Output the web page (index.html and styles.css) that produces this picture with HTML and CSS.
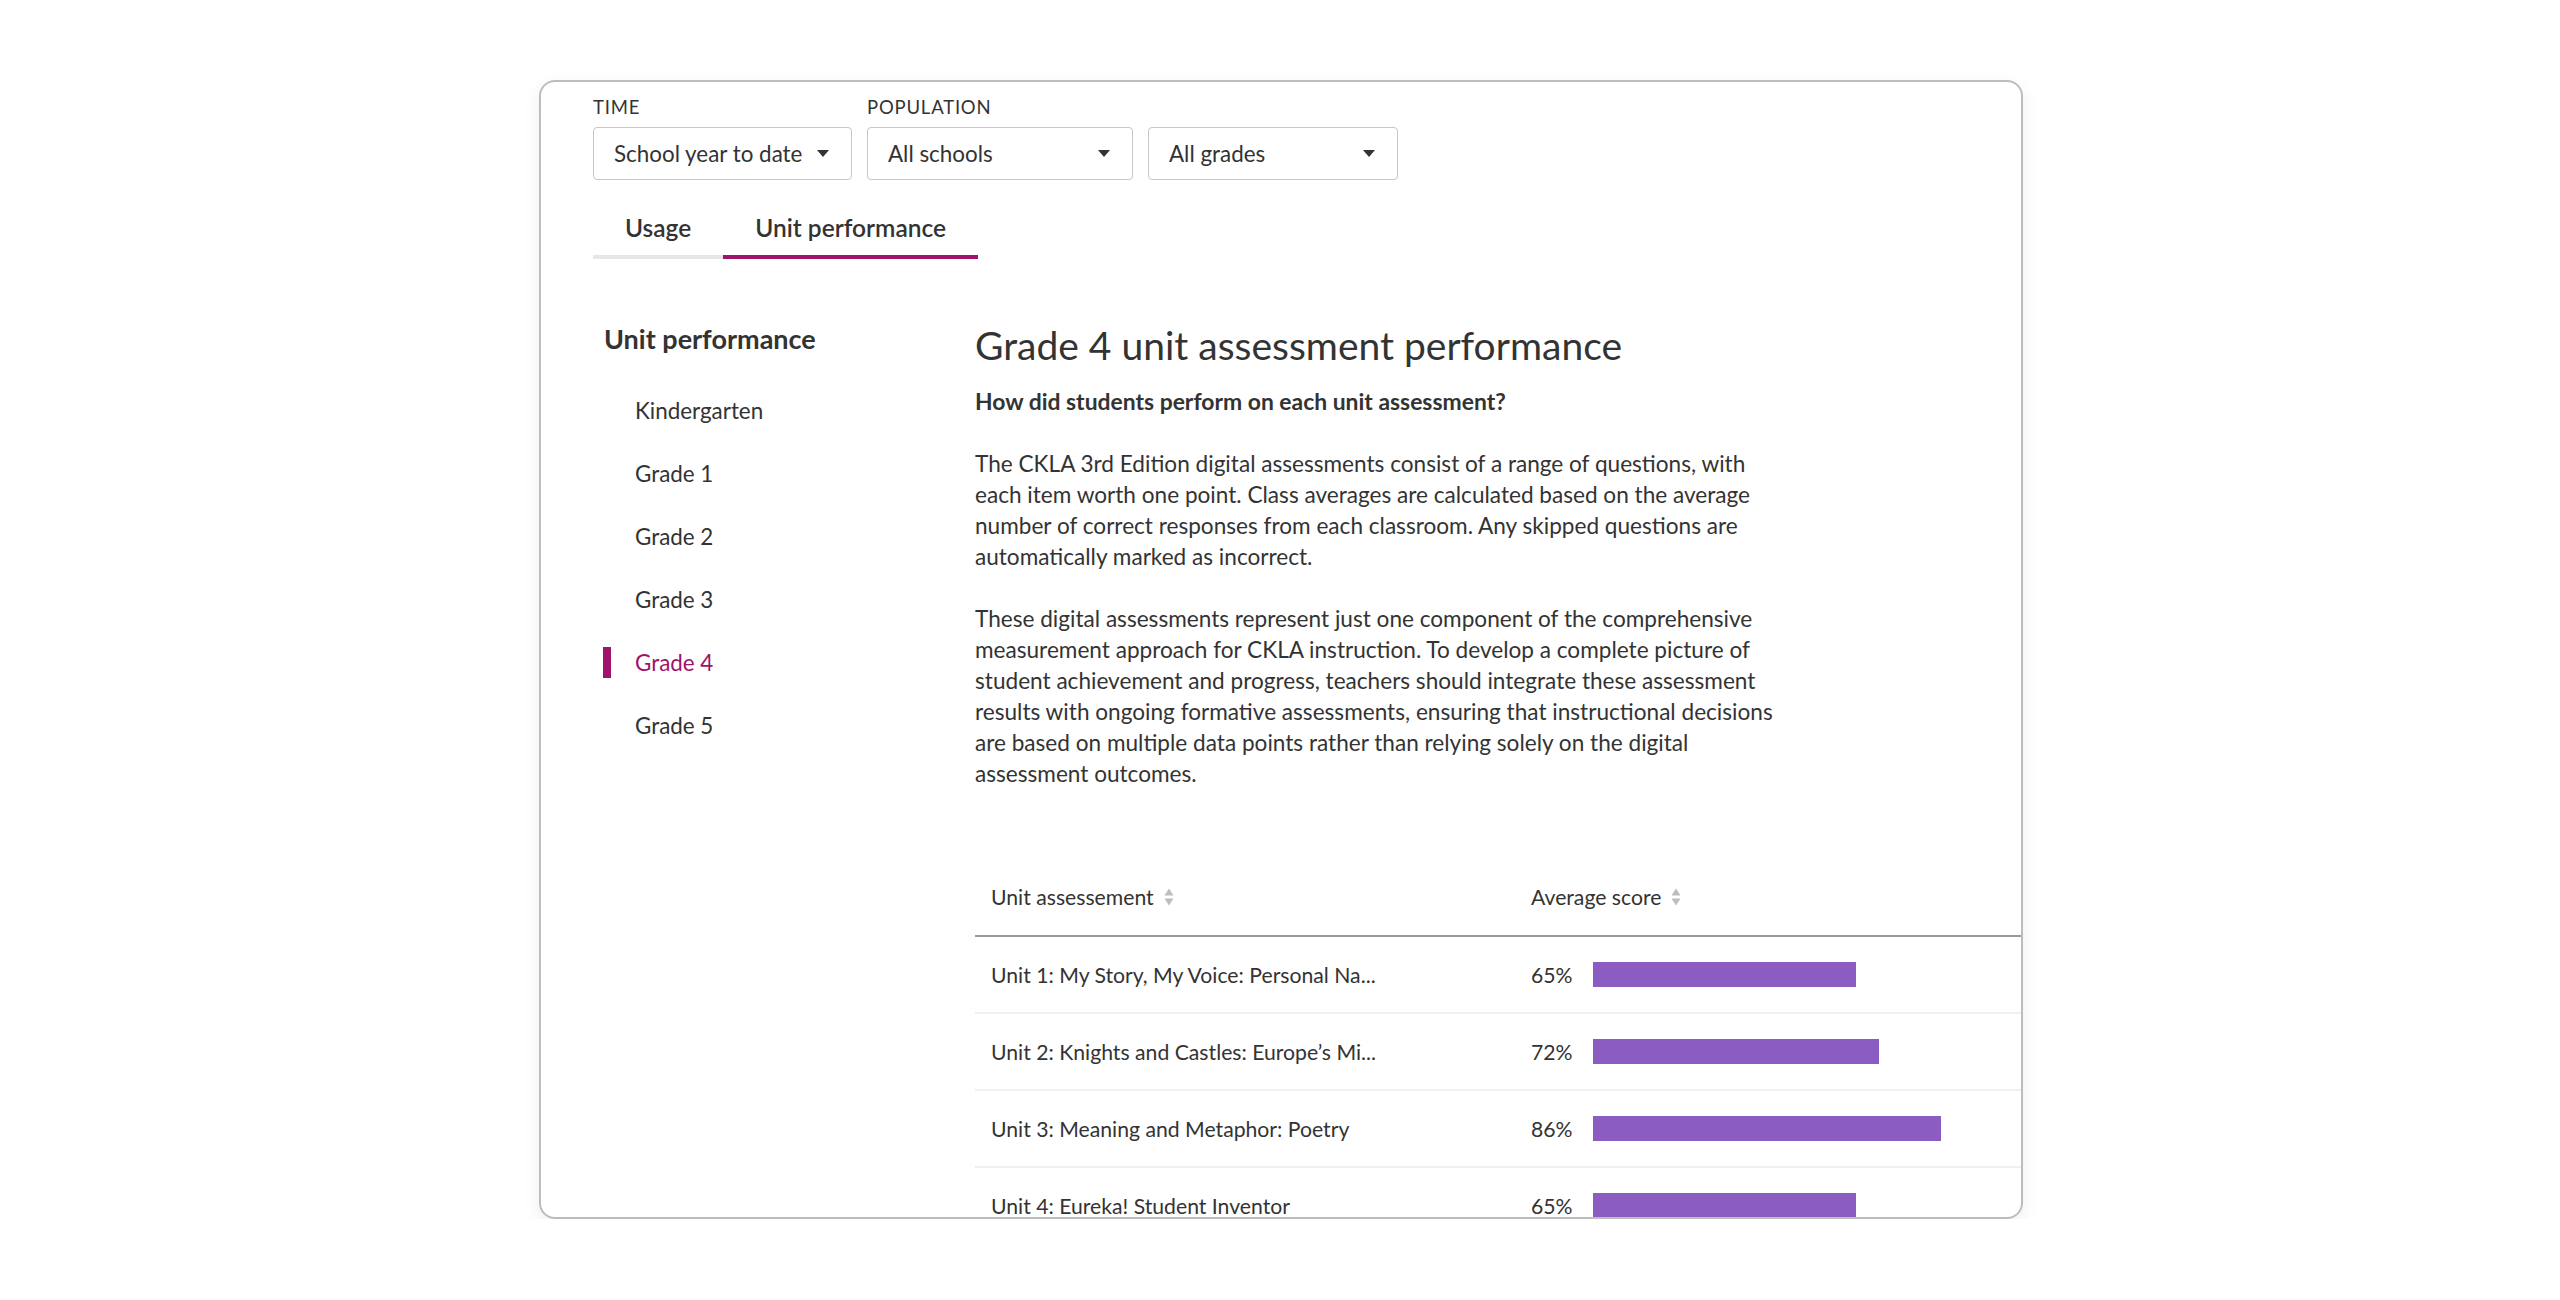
FILE: index.html
```html
<!DOCTYPE html>
<html lang="en">
<head>
<meta charset="utf-8">
<title>Unit performance</title>
<link rel="stylesheet" href="styles.css">
</head>
<body>
<div class="card">
  <div class="filters">
    <div class="filter">
      <div class="filter-label">Time</div>
      <div class="select w1"><span>School year to date</span><span class="caret"></span></div>
    </div>
    <div class="filter">
      <div class="filter-label">Population</div>
      <div class="select w2"><span>All schools</span><span class="caret"></span></div>
    </div>
    <div class="filter">
      <div class="filter-label">&nbsp;</div>
      <div class="select w3"><span>All grades</span><span class="caret"></span></div>
    </div>
  </div>

  <div class="tabs">
    <div class="tab">Usage</div>
    <div class="tab active">Unit performance</div>
  </div>

  <div class="body">
    <aside class="sidebar">
      <h2 class="side-title">Unit performance</h2>
      <ul class="side-list">
        <li class="side-item">Kindergarten</li>
        <li class="side-item">Grade 1</li>
        <li class="side-item">Grade 2</li>
        <li class="side-item">Grade 3</li>
        <li class="side-item current">Grade 4</li>
        <li class="side-item">Grade 5</li>
      </ul>
    </aside>

    <main class="main">
      <h1 class="title">Grade 4 unit assessment performance</h1>
      <p class="question">How did students perform on each unit assessment?</p>
      <p class="para">The CKLA 3rd Edition digital assessments consist of a range of questions, with each item worth one point. Class averages are calculated based on the average number of correct responses from each classroom. Any skipped questions are automatically marked as incorrect.</p>
      <p class="para">These digital assessments represent just one component of the comprehensive measurement approach for CKLA instruction. To develop a complete picture of student achievement and progress, teachers should integrate these assessment results with ongoing formative assessments, ensuring that instructional decisions are based on multiple data points rather than relying solely on the digital assessment outcomes.</p>

      <div class="table">
        <div class="row head">
          <div class="col c1">Unit assessement <svg class="sort" width="10" height="20" viewBox="0 0 10 20"><path d="M5 1.5 L9.5 8.5 H0.5 Z" fill="#bdbdbd"/><path d="M5 18.5 L9.5 11.5 H0.5 Z" fill="#bdbdbd"/></svg></div>
          <div class="col c2">Average score <svg class="sort" width="10" height="20" viewBox="0 0 10 20"><path d="M5 1.5 L9.5 8.5 H0.5 Z" fill="#bdbdbd"/><path d="M5 18.5 L9.5 11.5 H0.5 Z" fill="#bdbdbd"/></svg></div>
        </div>
        <div class="row">
          <div class="col c1">Unit 1: My Story, My Voice: Personal Na...</div>
          <div class="col c2"><span class="pct">65%</span><span class="bar" style="width:263px"></span></div>
        </div>
        <div class="row">
          <div class="col c1">Unit 2: Knights and Castles: Europe’s Mi...</div>
          <div class="col c2"><span class="pct">72%</span><span class="bar" style="width:286px"></span></div>
        </div>
        <div class="row">
          <div class="col c1">Unit 3: Meaning and Metaphor: Poetry</div>
          <div class="col c2"><span class="pct">86%</span><span class="bar" style="width:348px"></span></div>
        </div>
        <div class="row">
          <div class="col c1">Unit 4: Eureka! Student Inventor</div>
          <div class="col c2"><span class="pct">65%</span><span class="bar" style="width:263px"></span></div>
        </div>
      </div>
    </main>
  </div>
</div>
</body>
</html>
```

FILE: styles.css
```css
* { box-sizing: border-box; }

html, body {
  margin: 0;
  padding: 0;
  background: #ffffff;
}

body {
  font-family: Lato, "Noto Sans", "Liberation Sans", sans-serif;
  color: #333333;
}

.card {
  margin: 80px 0 0 539px;
  width: 1484px;
  height: 1139px;
  border: 2px solid #bdbdbd;
  border-radius: 16px;
  background: #fff;
  box-shadow: 0 6px 18px rgba(0, 0, 0, 0.07);
  overflow: hidden;
  padding: 15px 0 0 52px;
}

/* filters */
.filters {
  display: flex;
  gap: 15px;
}

.filter-label {
  font-size: 18.5px;
  line-height: 20px;
  letter-spacing: 0.8px;
  text-transform: uppercase;
  color: #333;
  margin-bottom: 10px;
}

.select {
  height: 53px;
  border: 1px solid #c6c6c6;
  border-radius: 4px;
  display: flex;
  align-items: center;
  justify-content: space-between;
  padding: 0 22px 0 20px;
  font-size: 22.4px;
  color: #333;
}

.w1 { width: 259px; }
.w2 { width: 266px; }
.w3 { width: 250px; }

.caret {
  width: 0;
  height: 0;
  border-left: 6px solid transparent;
  border-right: 6px solid transparent;
  border-top: 7.5px solid #333;
}

/* tabs */
.tabs {
  display: flex;
  margin-top: 34px;
}

.tab {
  padding: 0 32px 13px;
  font-size: 24.5px;
  line-height: 28px;
  font-weight: 600;
  color: #333;
  border-bottom: 4px solid #e6e6e6;
}

.tab.active {
  border-bottom-color: #a0136a;
}

/* body */
.body {
  display: flex;
  padding-top: 64px;
}

.sidebar {
  width: 382px;
  flex: none;
  padding-left: 10px;
}

.side-title {
  margin: 0;
  padding-left: 1px;
  font-size: 27px;
  line-height: 32px;
  font-weight: 700;
  color: #333;
}

.side-list {
  list-style: none;
  margin: 24px 0 0 -10px;
  padding: 0;
}

.side-item {
  display: flex;
  align-items: center;
  height: 63px;
  padding-left: 42px;
  font-size: 22.4px;
  color: #333;
  position: relative;
}

.side-item.current {
  color: #a0136a;
}

.side-item.current::before {
  content: "";
  position: absolute;
  left: 10px;
  top: 16px;
  width: 8px;
  height: 31px;
  background: #a0136a;
}

.main {
  flex: 1;
  min-width: 0;
}

.title {
  margin: 0;
  font-size: 39px;
  line-height: 44px;
  font-weight: 400;
  color: #333;
}

.question {
  margin: 20px 0 0;
  font-size: 22.9px;
  line-height: 28px;
  font-weight: 700;
  color: #333;
}

.para {
  margin: 33px 0 0;
  max-width: 808px;
  font-size: 22.6px;
  line-height: 31px;
  color: #333;
}

.para + .para {
  margin-top: 31px;
}

/* table */
.table {
  margin-top: 70px;
}

.row {
  display: flex;
  align-items: center;
  height: 77px;
  border-bottom: 2px solid #f0f0f0;
}

.row.head {
  height: 78px;
  border-bottom: 2px solid #9a9a9a;
}

.col {
  display: flex;
  align-items: center;
  font-size: 21.2px;
  color: #333;
  padding-left: 16px;
  white-space: nowrap;
}

.c1 { width: 540px; flex: none; }
.c2 { flex: 1; }

.sort {
  margin-left: 10px;
}

.pct {
  width: 62px;
  flex: none;
}

.bar {
  display: block;
  height: 25px;
  background: #8b5cc1;
}
```
